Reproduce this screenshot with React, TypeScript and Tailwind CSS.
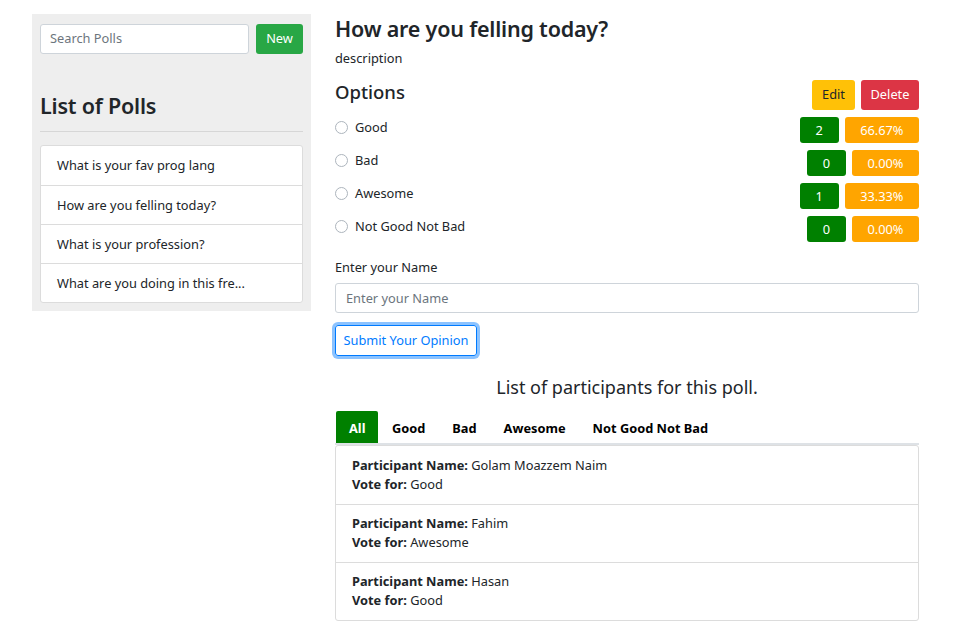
import React from "react";

const font = { fontFamily: '"Noto Sans", "Open Sans", sans-serif' };

const polls = [
  "What is your fav prog lang",
  "How are you felling today?",
  "What is your profession?",
  "What are you doing in this fre...",
];

const options = [
  { name: "Good", count: 2, pct: "66.67%" },
  { name: "Bad", count: 0, pct: "0.00%" },
  { name: "Awesome", count: 1, pct: "33.33%" },
  { name: "Not Good Not Bad", count: 0, pct: "0.00%" },
];

const participants = [
  { name: "Golam Moazzem Naim", vote: "Good" },
  { name: "Fahim", vote: "Awesome" },
  { name: "Hasan", vote: "Good" },
];

export default function App() {
  return (
    <div
      className="w-[956px] h-[627px] bg-white text-[#212529] text-[12.8px] leading-[1.5] overflow-hidden flex items-start pl-[32px] pt-[14px] gap-[24px]"
      style={font}
    >
      {/* Sidebar */}
      <div className="w-[279px] bg-[#eeeeee] px-[8px] pt-[10px] pb-[8px]">
        <div className="flex gap-[7px]">
          <div className="w-[209px] h-[30px] bg-white border border-[#ced4da] rounded-[3px] flex items-center pl-[9px] text-[#6c757d]">
            Search Polls
          </div>
          <div className="w-[47px] h-[30px] bg-[#28a745] rounded-[3px] text-white flex items-center justify-center">
            New
          </div>
        </div>
        <div className="mt-[39px] text-[21.5px] font-semibold leading-[1.2] tracking-[-0.2px]">List of Polls</div>
        <div className="mt-[12px] h-px bg-[#d6d6d6]" />
        <div className="mt-[13px] bg-white border border-[#dcdcdc] rounded-[3px]">
          {polls.map((p, i) => (
            <div
              key={i}
              className={`h-[39px] flex items-center pl-[16px] pt-[1px] ${i > 0 ? "border-t border-[#dcdcdc]" : ""}`}
            >
              {p}
            </div>
          ))}
        </div>
      </div>

      {/* Main */}
      <div className="w-[584px]">
        <div className="text-[21.5px] font-semibold leading-[1.2] mt-[2px] tracking-[-0.2px]">How are you felling today?</div>
        <div className="mt-[7px]">description</div>
        <div className="flex items-center justify-between mt-[12px]">
          <div className="text-[18.5px] font-medium leading-[1.2] -mt-[6px]">Options</div>
          <div className="flex gap-[6px]">
            <div className="h-[30px] w-[43px] bg-[#ffc107] rounded-[3px] flex items-center justify-center text-[#212529]">
              Edit
            </div>
            <div className="h-[30px] w-[58px] bg-[#dc3545] rounded-[3px] flex items-center justify-center text-white">
              Delete
            </div>
          </div>
        </div>
        <div className="mt-[4px]">
          {options.map((o, i) => (
            <div key={i} className="h-[33px] flex items-center justify-between">
              <div className="flex items-center gap-[7px] -mt-[6px]">
                <span className="w-[13px] h-[13px] rounded-full border border-[#adb5bd] bg-white" />
                <span>{o.name}</span>
              </div>
              <div className="flex gap-[6px]">
                <div className="h-[26px] w-[39px] bg-[#008000] rounded-[3px] text-white flex items-center justify-center">
                  {o.count}
                </div>
                <div className="h-[26px] px-[15.5px] bg-[#ffa500] rounded-[3px] text-white flex items-center justify-center">
                  {o.pct}
                </div>
              </div>
            </div>
          ))}
        </div>
        <div className="mt-[12px]">Enter your Name</div>
        <div className="mt-[6px] h-[30px] border border-[#ced4da] rounded-[3px] flex items-center pl-[10px] text-[#6c757d]">
          Enter your Name
        </div>
        <div className="mt-[12px] inline-flex h-[31px] w-[142px] items-center justify-center border border-[#007bff] rounded-[3px] text-[#007bff] shadow-[0_0_0_3px_rgba(0,123,255,0.45)]">
          Submit Your Opinion
        </div>
        <div className="mt-[21px] text-center text-[18px] leading-[1.2]">List of participants for this poll.</div>
        <div className="mt-[12px] flex border-b-2 border-[#dee2e6] font-bold text-black">
          <div className="h-[32px] px-[13px] pt-[3px] bg-[#008000] text-white flex items-center rounded-t-[2px] ml-px">All</div>
          {["Good", "Bad", "Awesome", "Not Good Not Bad"].map((t) => (
            <div key={t} className="h-[32px] px-[13.5px] pt-[3px] flex items-center">
              {t}
            </div>
          ))}
        </div>
        <div className="mt-0 border border-[#dcdcdc] rounded-[3px]">
          {participants.map((p, i) => (
            <div
              key={i}
              className={`h-[58px] pl-[16px] flex flex-col justify-center leading-[19px] ${i > 0 ? "border-t border-[#dcdcdc]" : ""}`}
            >
              <div>
                <span className="font-bold">Participant Name:</span> {p.name}
              </div>
              <div>
                <span className="font-bold">Vote for:</span> {p.vote}
              </div>
            </div>
          ))}
        </div>
      </div>
    </div>
  );
}
